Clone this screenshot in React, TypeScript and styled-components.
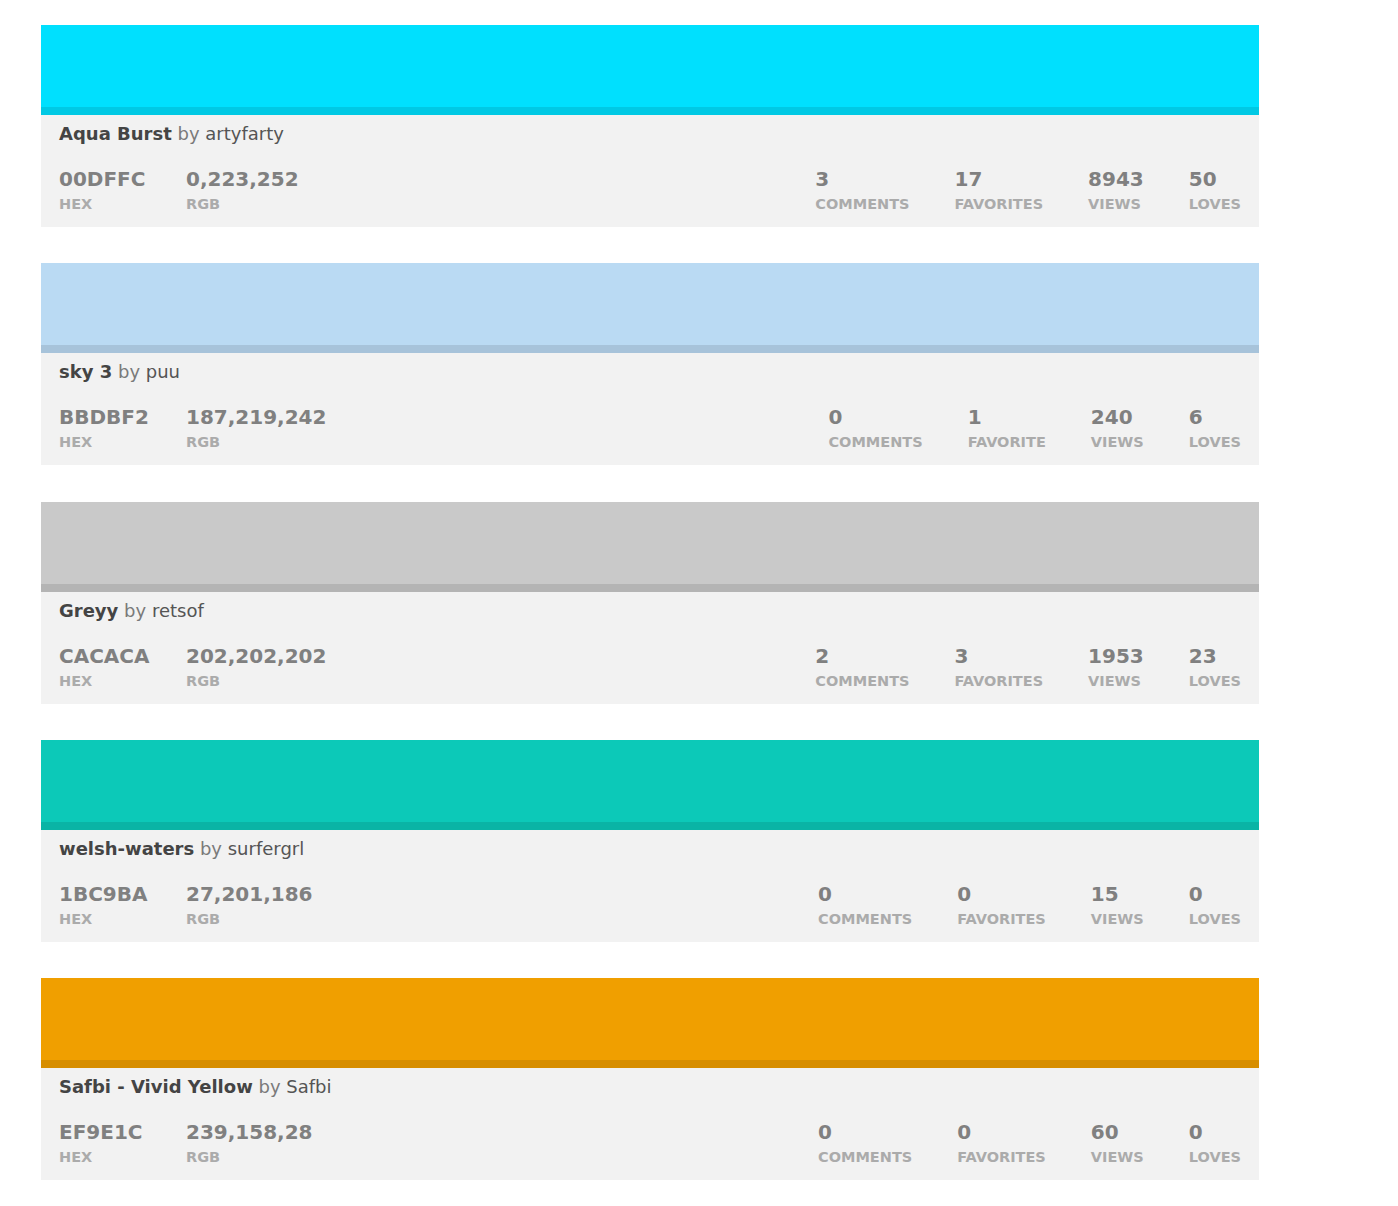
import React from "react";
import styled, { createGlobalStyle } from "styled-components";

const GlobalStyle = createGlobalStyle`
  body {
    margin: 0;
    background: #ffffff;
    font-family: "DejaVu Sans", "Noto Sans", "Liberation Sans", sans-serif;
  }
`;

interface Palette {
  title: string;
  user: string;
  hex: string;
  swatch: string;
  rgb: string;
  comments: number;
  favorites: number;
  views: number;
  loves: number;
}

const palettes: Palette[] = [
  { title: "Aqua Burst", user: "artyfarty", hex: "00DFFC", swatch: "#00E0FE", rgb: "0,223,252", comments: 3, favorites: 17, views: 8943, loves: 50 },
  { title: "sky 3", user: "puu", hex: "BBDBF2", swatch: "#BADAF3", rgb: "187,219,242", comments: 0, favorites: 1, views: 240, loves: 6 },
  { title: "Greyy", user: "retsof", hex: "CACACA", swatch: "#C9C9C9", rgb: "202,202,202", comments: 2, favorites: 3, views: 1953, loves: 23 },
  { title: "welsh-waters", user: "surfergrl", hex: "1BC9BA", swatch: "#0CC9B8", rgb: "27,201,186", comments: 0, favorites: 0, views: 15, loves: 0 },
  { title: "Safbi - Vivid Yellow", user: "Safbi", hex: "EF9E1C", swatch: "#F09F00", rgb: "239,158,28", comments: 0, favorites: 0, views: 60, loves: 0 },
];

const plural = (n: number, word: string) => (n === 1 ? word : `${word}s`);

const Stat = ({ value, label, wide }: { value: string | number; label: string; wide?: boolean }) => (
  <StatBox $wide={wide}>
    <StatValue>{value}</StatValue>
    <StatLabel>{label}</StatLabel>
  </StatBox>
);

const PaletteCard = ({ p }: { p: Palette }) => (
  <Card>
    <Swatch $color={p.swatch} />
    <Info>
      <Title>
        <strong>{p.title}</strong> <By>by</By> <User>{p.user}</User>
      </Title>
      <StatsRow>
        <ColorValues>
          <Stat value={p.hex} label="Hex" wide />
          <Stat value={p.rgb} label="RGB" />
        </ColorValues>
        <Counters>
          <Stat value={p.comments} label={plural(p.comments, "Comment")} />
          <Stat value={p.favorites} label={plural(p.favorites, "Favorite")} />
          <Stat value={p.views} label={plural(p.views, "View")} />
          <Stat value={p.loves} label={plural(p.loves, "Love")} />
        </Counters>
      </StatsRow>
    </Info>
  </Card>
);

export default function App() {
  return (
    <>
      <GlobalStyle />
      <Page>
        {palettes.map((p) => (
          <PaletteCard key={p.hex} p={p} />
        ))}
      </Page>
    </>
  );
}

const Page = styled.div`
  display: flex;
  flex-direction: column;
  gap: 36.25px;
  padding: 25px 0 0 41px;
  width: 1218px;
`;

const Card = styled.div`
  background: #f2f2f2;
`;

const Swatch = styled.div<{ $color: string }>`
  height: 90px;
  background: ${(p) => p.$color};
  box-shadow: inset 0 -8px 0 rgba(0, 0, 0, 0.1);
`;

const Info = styled.div`
  padding: 8px 18px 14px;
`;

const Title = styled.div`
  font-size: 18px;
  line-height: 22px;
  color: #555;
  strong {
    font-weight: 700;
    color: #444;
  }
`;

const By = styled.span`
  color: #7a7a7a;
`;

const User = styled.span`
  color: #555;
`;

const StatsRow = styled.div`
  display: flex;
  justify-content: space-between;
  margin-top: 22px;
`;

const ColorValues = styled.div`
  display: flex;
`;

const Counters = styled.div`
  display: flex;
  gap: 45px;
`;

const StatBox = styled.div<{ $wide?: boolean }>`
  display: flex;
  flex-direction: column;
  gap: 4px;
  width: ${(p) => (p.$wide ? "127px" : "auto")};
`;

const StatValue = styled.div`
  font-size: 20px;
  line-height: 24px;
  font-weight: 700;
  color: #808080;
`;

const StatLabel = styled.div`
  font-size: 14.5px;
  line-height: 18px;
  font-weight: 700;
  text-transform: uppercase;
  color: #ababab;
`;
